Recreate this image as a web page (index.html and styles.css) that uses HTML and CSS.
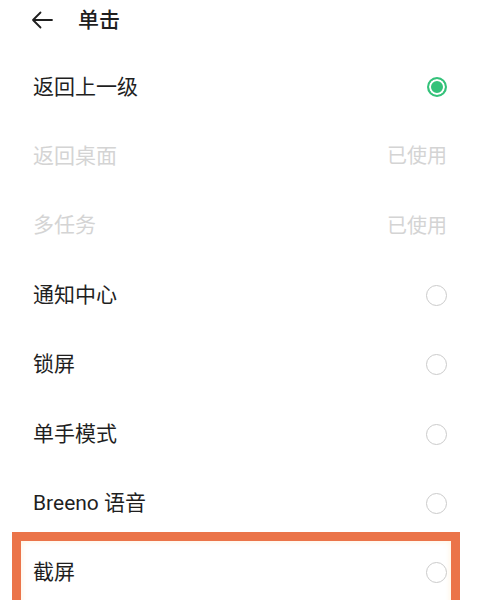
FILE: index.html
```html
<!DOCTYPE html>
<html lang="zh-CN">
<head>
<meta charset="utf-8">
<link rel="stylesheet" href="styles.css">
</head>
<body>
<div class="page">
  <header class="header">
    <svg class="back" width="22" height="18" viewBox="0 0 22 18" aria-hidden="true">
      <path d="M21 9H2M9.5 1.5L2 9l7.5 7.5" fill="none" stroke="#1f1f1f" stroke-width="1.8" stroke-linecap="round" stroke-linejoin="round"/>
    </svg>
    <span class="title">单击</span>
  </header>
  <ul class="list">
    <li class="row"><span class="label">返回上一级</span><span class="radio on"></span></li>
    <li class="row disabled"><span class="label">返回桌面</span><span class="used">已使用</span></li>
    <li class="row disabled"><span class="label">多任务</span><span class="used">已使用</span></li>
    <li class="row"><span class="label">通知中心</span><span class="radio"></span></li>
    <li class="row"><span class="label">锁屏</span><span class="radio"></span></li>
    <li class="row"><span class="label">单手模式</span><span class="radio"></span></li>
    <li class="row"><span class="label">Breeno 语音</span><span class="radio"></span></li>
    <li class="row highlight"><span class="label">截屏</span><span class="radio"></span></li>
  </ul>
</div>
</body>
</html>
```
FILE: styles.css
```css
*, *::before, *::after { box-sizing: border-box; }
html, body {
  margin: 0;
  padding: 0;
  background: #ffffff;
  overflow: hidden;
}
body {
  width: 480px;
  height: 600px;
  font-family: "Roboto", "Noto Sans CJK SC", sans-serif;
  color: #1f1f1f;
}
.page {
  width: 480px;
  height: 600px;
  overflow: hidden;
}
.header {
  height: 40px;
  display: flex;
  align-items: center;
  padding-left: 31px;
  gap: 25px;
}
.back { display: block; }
.title {
  font-size: 21px;
  font-weight: 500;
  line-height: 1;
}
.list {
  list-style: none;
  margin: 12.3px 0 0 0;
  padding: 0;
}
.row {
  height: 69.43px;
  display: flex;
  align-items: center;
  justify-content: space-between;
  padding: 0 33px 0 33px;
  position: relative;
}
.label {
  font-size: 21px;
  line-height: 1;
  color: #1f1f1f;
}
.disabled .label { color: #d4d4d4; }
.used {
  font-size: 20px;
  line-height: 1;
  color: #d4d4d4;
}
.radio {
  width: 21px;
  height: 21px;
  border-radius: 50%;
  border: 1.8px solid #cbcbcb;
}
.radio.on {
  width: 20px;
  height: 20px;
  border: 2px solid #34c27a;
  background: #34c27a;
  box-shadow: inset 0 0 0 2px #ffffff;
}
.highlight::after {
  content: "";
  position: absolute;
  left: 12px;
  width: 448px;
  top: -6px;
  height: 120px;
  border: 9px solid #eb7449;
  box-shadow: inset 0 0 6px rgba(255, 214, 150, 0.35);
  pointer-events: none;
}
```
